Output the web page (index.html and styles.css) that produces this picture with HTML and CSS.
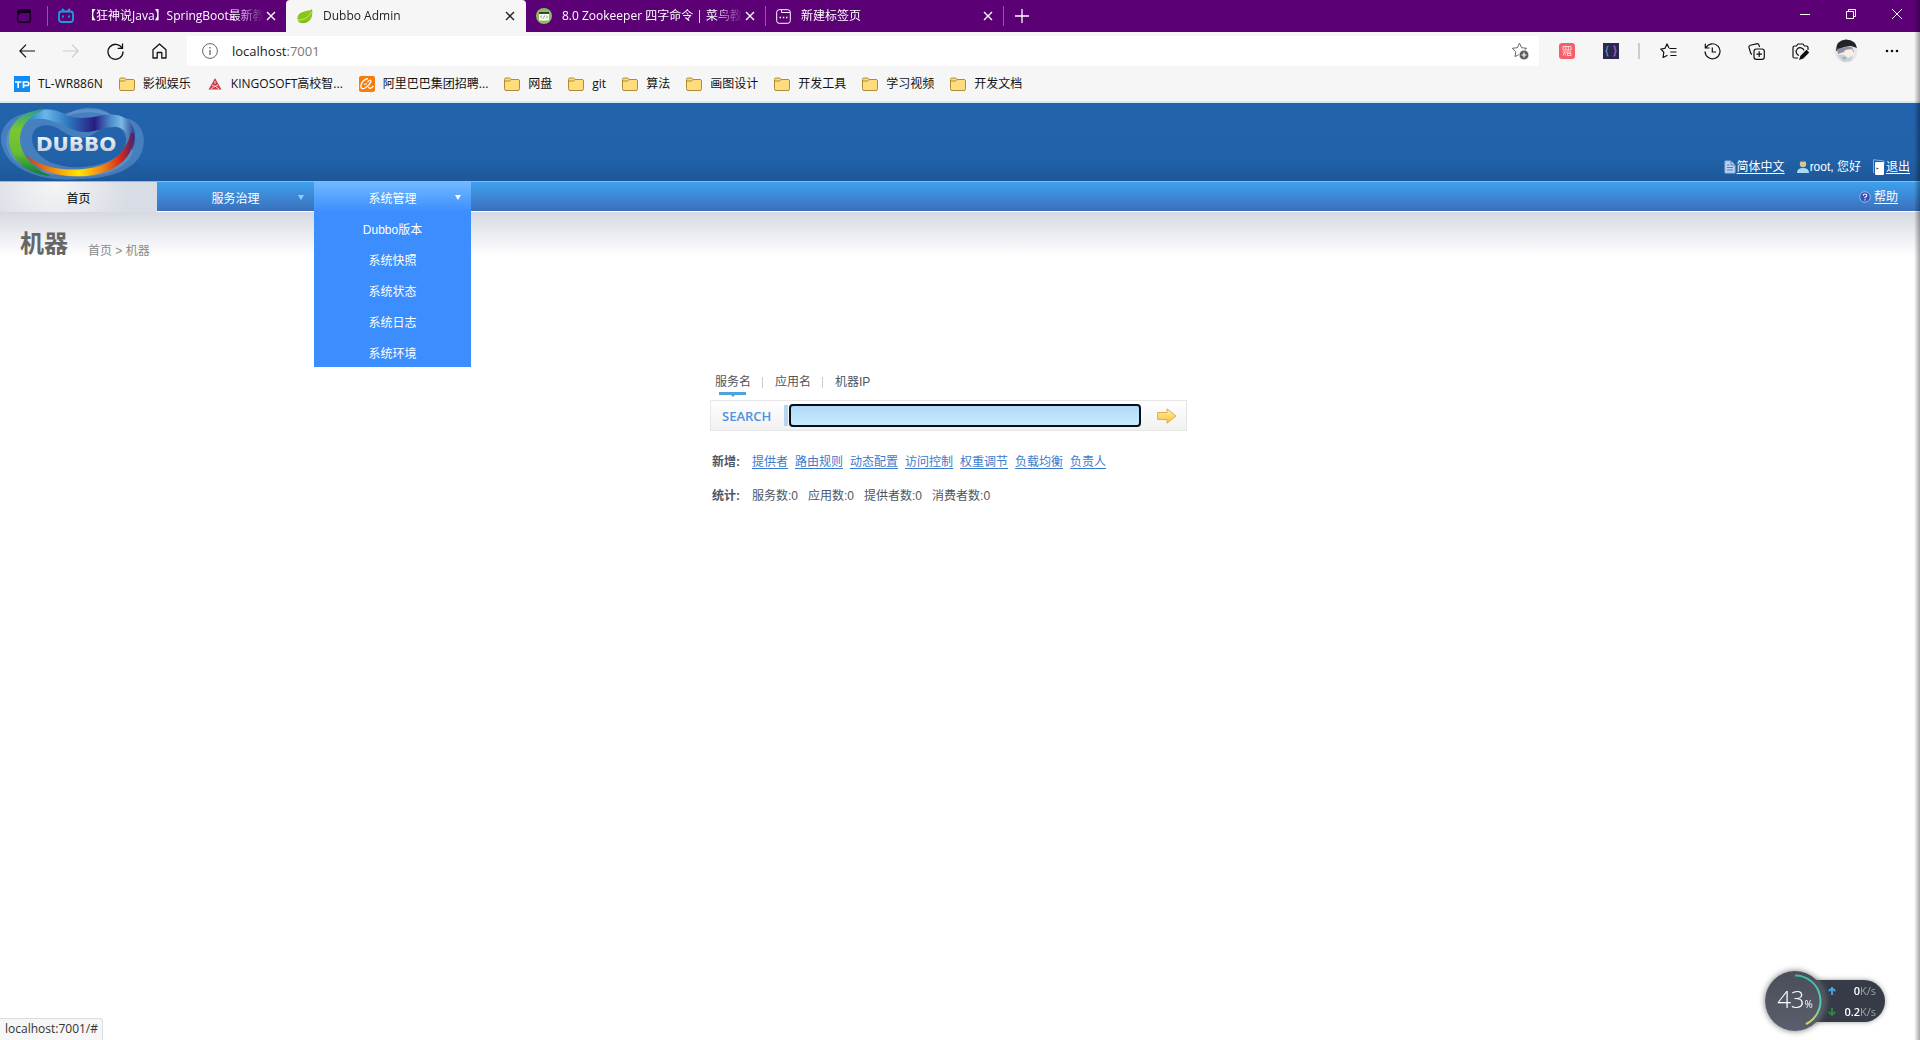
FILE: index.html
```html
<!DOCTYPE html>
<html lang="zh-CN">
<head>
<meta charset="utf-8">
<title>Dubbo Admin</title>
<link rel="stylesheet" href="styles.css">
</head>
<body>
<svg class="defs" aria-hidden="true">
  <symbol id="folder" viewBox="0 0 16 16">
    <path d="M.5 3.500Q.5 2 2 2H5.500L7.200 3.500H14Q15.500 3.500 15.500 5V12.500Q15.500 14.500 14 14.500H2Q.5 14.500 .5 12.500Z" fill="#ffdc7c" stroke="#b08a35"/>
    <path d="M.5 5H5.500L7.200 3.500" fill="none" stroke="#b08a35"/>
  </symbol>
  <symbol id="cross" viewBox="0 0 10 10"><path d="M1 1L9 9M9 1L1 9" fill="none" stroke="currentColor" stroke-width="1.400"/></symbol>
</svg>

<header class="browser">
  <div class="tabstrip">
    <button class="tab-actions" aria-label="标签操作"><svg width="14" height="14" viewBox="0 0 14 14"><rect x=".7" y=".7" width="12.600" height="12.600" rx="2" fill="none" stroke="#14001c" stroke-width="1.400"/><path d="M1 1H13V4H1ZM1 4H3V6H1Z" fill="#14001c"/></svg></button>
    <div class="tab tab-first">
      <svg width="16" height="16" viewBox="0 0 16 16" fill="none" stroke="#19a0dc" stroke-width="1.800"><rect x="1" y="3.500" width="14" height="10.500" rx="2.500"/><path d="M4 .8L6.300 3M12 .8L9.700 3M5 7.500V9.500M11 7.500V9.500"/></svg>
      <span class="tab-title">【狂神说Java】SpringBoot最新教</span>
      <button class="tab-close" aria-label="关闭"><svg width="10" height="10"><use href="#cross"/></svg></button>
    </div>
    <div class="tab tab-active">
      <svg width="16" height="16" viewBox="0 0 16 16"><path d="M15 1C12 4 1 2 .5 10Q.3 14 4 15C10 16 17 12 15 1Z" fill="#8cc419"/><path d="M1 12C7 12 12 9 14.500 4" fill="none" stroke="#c7e67c"/><path d="M2 14Q9 16 14 9Q10 15 2 14Z" fill="#5d951a"/></svg>
      <span class="tab-title">Dubbo Admin</span>
      <button class="tab-close" aria-label="关闭"><svg width="10" height="10"><use href="#cross"/></svg></button>
    </div>
    <div class="tab">
      <svg width="16" height="16" viewBox="0 0 16 16"><circle cx="8" cy="8" r="8" fill="#8fba5b"/><rect x="3" y="4" width="10" height="8.500" rx="1" fill="#fff"/><path d="M3 4H13V6H3Z" fill="#2c4a32"/><path d="M6 7.500L4.500 9L6 10.500M10 7.500L11.500 9L10 10.500M8.500 7.500L7.500 10.500" fill="none" stroke="#5f8a48" stroke-width=".8"/></svg>
      <span class="tab-title">8.0 Zookeeper 四字命令 | 菜鸟教</span>
      <button class="tab-close" aria-label="关闭"><svg width="10" height="10"><use href="#cross"/></svg></button>
    </div>
    <div class="tab tab-last">
      <svg width="15" height="15" viewBox="0 0 15 15" fill="none" stroke="#fff"><rect x=".7" y=".7" width="13.600" height="13.600" rx="2.500"/><path d="M5.500 1V3.500H14"/><path d="M3.500 8.500H5M6.800 8.500H8.300M10 8.500H11.500" stroke-width="1.500"/></svg>
      <span class="tab-title">新建标签页</span>
      <button class="tab-close" aria-label="关闭"><svg width="10" height="10"><use href="#cross"/></svg></button>
    </div>
    <button class="tab-new" aria-label="新建"><svg width="14" height="14" viewBox="0 0 14 14"><path d="M7 0V14M0 7H14" stroke="#fff" stroke-width="1.300"/></svg></button>
    <div class="window-buttons">
      <button aria-label="最小化"><svg width="10" height="10"><path d="M0 5.500H10" stroke="#fff"/></svg></button>
      <button aria-label="还原"><svg width="10" height="10" fill="none" stroke="#fff"><path d="M.5 2.500H7.500V9.500H.5ZM2.500 2.500V.5H9.500V7.500H7.500"/></svg></button>
      <button aria-label="关闭窗口"><svg width="10" height="10"><path d="M0 0L10 10M10 0L0 10" stroke="#fff"/></svg></button>
    </div>
  </div>

  <div class="toolbar">
    <div class="tools">
      <button aria-label="后退"><svg width="16" height="14" viewBox="0 0 16 14" fill="none" stroke="#111" stroke-width="1.200"><path d="M16 7H1M7 .7L.9 7L7 13.300"/></svg></button>
      <button aria-label="前进"><svg width="16" height="14" viewBox="0 0 16 14" fill="none" stroke="#ccc" stroke-width="1.200"><path d="M0 7H15M9 .7L15.100 7L9 13.300"/></svg></button>
      <button aria-label="刷新"><svg width="17" height="17" viewBox="0 0 17 17" fill="none" stroke="#111" stroke-width="1.300"><path d="M15 5A7.500 7.500 0 1 0 16 8.500M15.500 .5V5.300H10.700"/></svg></button>
      <button aria-label="主页"><svg width="15" height="16" viewBox="0 0 15 16" fill="none" stroke="#111" stroke-width="1.300" stroke-linejoin="round"><path d="M1 6.700L7.500 1L14 6.700V15H9.800V9.500H5.200V15H1Z"/></svg></button>
    </div>
    <div class="address">
      <svg width="16" height="16" viewBox="0 0 16 16" fill="none" stroke="#666"><circle cx="8" cy="8" r="7.400"/><path d="M8 7V12M8 4V5.500" stroke-width="1.300"/></svg>
      <span class="url">localhost<span class="port">:7001</span></span>
      <button class="add-favorite" aria-label="收藏此页"><svg width="18" height="18" viewBox="0 0 18 18"><path d="M8.500 1.200L10.600 5.700L15.700 6.300L12 9.700L13 14.600L8.500 12.200L4 14.600L4.800 9.700L1.200 6.300L6.300 5.700Z" fill="none" stroke="#666" stroke-linejoin="round"/><circle cx="13" cy="13" r="4.900" fill="#5c5c5c" stroke="#fff" stroke-width=".8"/><path d="M13 10.500V15.500M10.500 13H15.500" stroke="#fff" stroke-width="1.200"/></svg></button>
    </div>
    <div class="tools">
      <button aria-label="扩展一"><svg width="16" height="16" viewBox="0 0 16 16"><rect width="16" height="16" rx="3" fill="#f4606a"/><path d="M4 3.500H12V7H4ZM6.700 3.500V7M9.300 3.500V7M3.500 9H12.500M4 12.500L5.500 9.500L7 12.500M8.500 9.500V12.500H12V10.500H8.500" fill="none" stroke="#ffe3e4" stroke-width=".9"/></svg></button>
      <button aria-label="扩展二"><svg width="16" height="16" viewBox="0 0 16 16"><path d="M0 0H16V16H0Z" fill="#2b2a4c"/><path d="M5.500 3Q4 3 4 5V6.500L3 8L4 9.500V11Q4 13 5.500 13" fill="none" stroke="#5b95d4" stroke-width="1.200"/><path d="M10.500 3Q12 3 12 5V6.500L13 8L12 9.500V11Q12 13 10.500 13" fill="none" stroke="#9d55d4" stroke-width="1.400"/></svg></button>
      <span class="tool-divider"></span>
      <button aria-label="收藏夹"><svg width="17" height="16" viewBox="0 0 17 16" fill="none" stroke="#111" stroke-width="1.200" stroke-linejoin="round"><path d="M9 5L7 .9L5 5.300L.8 6L3.800 9.200L3.100 14.500L7.500 12.300M9.300 5.500H16.500M10.300 9H16.500M10.300 12.500H16.500"/></svg></button>
      <button aria-label="历史记录"><svg width="17" height="17" viewBox="0 0 17 17" fill="none" stroke="#111" stroke-width="1.200"><path d="M2 4.500A7.500 7.500 0 1 1 1 8.500M1.300 .8V5H5.500M8.300 4.500V9H12"/></svg></button>
      <button aria-label="集锦"><svg width="17" height="17" viewBox="0 0 17 17" fill="none" stroke="#111" stroke-width="1.200"><rect x="6" y="6" width="10.300" height="10.300" rx="2.300"/><path d="M11.200 8.300V14M8.400 11.200H14M4 11.500Q3 11 2.500 9.500L1 4.700Q.6 2.900 2.300 2.200L8.500 .8Q10.500 .4 11 2.200L11.600 4"/></svg></button>
      <button aria-label="网页捕获"><svg width="17" height="17" viewBox="0 0 17 17" fill="none" stroke="#111" stroke-width="1.200"><path d="M6 15H2.500Q1 15 1 13.500V4.500Q1 3 2.500 3H4.500L6 1H11L12.500 3H14.500Q16 3 16 4.500V7M7 12.500A4 4 0 1 1 12 7.500"/><path d="M8 16L9 13L14.500 7.500L16.500 9.500L11 15Z" fill="#111"/></svg></button>
      <button class="profile" aria-label="个人资料"><svg width="24" height="24" viewBox="0 0 24 24"><circle cx="12" cy="12" r="11.500" fill="#e9e7e8"/><path d="M2 12Q2 1 12 .5Q22 1 23 9L17 7L10 8L5 11Z" fill="#20222c"/><path d="M3 10L11 8L18 8L20 13L12 12L4 15Z" fill="#8e90a2"/><path d="M11 11L18 10L20 15L14 19L10 15Z" fill="#f9eee5"/><path d="M3 16L10 16L14 19L19 17L17 22L9 23Z" fill="#c0d0df"/><path d="M8 18L12 18L11 21Z" fill="#bca874"/></svg></button>
      <button aria-label="设置及其他"><svg width="14" height="4"><g fill="#111"><circle cx="2" cy="2" r="1.300"/><circle cx="7" cy="2" r="1.300"/><circle cx="12" cy="2" r="1.300"/></g></svg></button>
    </div>
  </div>

  <nav class="bookmarks" aria-label="书签">
    <a href="#"><svg width="16" height="16"><path d="M0 0H16V16H0Z" fill="#118cf5"/><path d="M1 6H7.500M4.200 6V12M9.500 12V6H13Q14.800 6 14.800 7.800T13 9.500H9.500" fill="none" stroke="#fff" stroke-width="1.700"/></svg>TL-WR886N</a>
    <a href="#"><svg width="16" height="16"><use href="#folder"/></svg>影视娱乐</a>
    <a href="#"><svg width="16" height="16" viewBox="0 0 16 16"><path d="M8 2L11 7.500L14.500 13.500H1.500L5 7.500Z" fill="#c93e46"/><path d="M8 5V8M8 10L4 13M8 10L12 13M5 9L8 10.500L11 9" stroke="#f4d5d7" fill="none"/></svg>KINGOSOFT高校智...</a>
    <a href="#"><svg width="16" height="16" viewBox="0 0 16 16"><rect width="16" height="16" rx="2" fill="#fa7a0c"/><path d="M9 2.500Q3 4 2 9.500Q1.500 14 6 12Q11 9 12 5Q11 3 8.500 6M9.500 11Q10.500 14 14.500 10M5 8.500L8 7.500" fill="none" stroke="#fff" stroke-width="1.300"/></svg>阿里巴巴集团招聘...</a>
    <a href="#"><svg width="16" height="16"><use href="#folder"/></svg>网盘</a>
    <a href="#"><svg width="16" height="16"><use href="#folder"/></svg>git</a>
    <a href="#"><svg width="16" height="16"><use href="#folder"/></svg>算法</a>
    <a href="#"><svg width="16" height="16"><use href="#folder"/></svg>画图设计</a>
    <a href="#"><svg width="16" height="16"><use href="#folder"/></svg>开发工具</a>
    <a href="#"><svg width="16" height="16"><use href="#folder"/></svg>学习视频</a>
    <a href="#"><svg width="16" height="16"><use href="#folder"/></svg>开发文档</a>
  </nav>
</header>

<div class="page">
  <header class="masthead">
    <svg class="logo" width="148" height="78" viewBox="0 0 148 78" role="img" aria-label="DUBBO">
      <defs>
        <linearGradient id="top" gradientUnits="userSpaceOnUse" x1="30" y1="0" x2="134" y2="0"><stop offset="0" stop-color="#2e8bd0"/><stop offset=".15" stop-color="#68b7e8"/><stop offset=".38" stop-color="#2c73bd"/><stop offset=".62" stop-color="#2a1d80"/><stop offset=".78" stop-color="#4d8fce"/><stop offset=".88" stop-color="#79b9e6"/><stop offset="1" stop-color="#314292"/></linearGradient>
        <linearGradient id="bottom" gradientUnits="userSpaceOnUse" x1="24" y1="0" x2="134" y2="0"><stop offset="0" stop-color="#d5311e"/><stop offset=".2" stop-color="#ee7414"/><stop offset=".5" stop-color="#ffe500"/><stop offset=".7" stop-color="#f28b13"/><stop offset=".88" stop-color="#d42a1c"/><stop offset="1" stop-color="#452370"/></linearGradient>
        <linearGradient id="left" x1="0" y1="0" x2="0" y2="1"><stop offset="0" stop-color="#2e9d8d"/><stop offset=".3" stop-color="#79c82f"/><stop offset=".65" stop-color="#68bd32"/><stop offset="1" stop-color="#087a3a"/></linearGradient>
        <linearGradient id="metal" x1="0" y1="0" x2="0" y2="1"><stop offset="0" stop-color="#fff"/><stop offset="1" stop-color="#b7c4d6"/></linearGradient>
      </defs>
      <path d="M66 12C84 0 105 4 115 15C137 12 147 28 143 45C138 66 112 76 78 76C35 80 1 62 1 35C2 20 15 11 30 10C43 3 56 5 66 12ZM62 28C50 19 33 20 32 35C32 52 52 66 82 64C110 62 127 51 126 36C124 22 109 17 98 28C86 38 73 36 62 28Z" fill="#8cb8e3" fill-opacity=".35" fill-rule="evenodd"/>
      <path d="M65 12C95 2 119 11 128 30C143 54 115 72 82 72C45 72 13 65 8 43C5 22 26 10 52 10Z" fill="none" stroke="#9cc2e8" stroke-opacity=".25" stroke-width="3"/>
      <path d="M33 10C44 4 57 7 66 12C86 20 103 9 117 12C132 15 140 30 132 48C130 36 127 25 116 24C104 23 92 32 77 28C61 23 48 12 30 17Z" fill="url(#top)"/>
      <path d="M24 49C31 60 57 69 84 66C112 63 126 50 131 29L134 31C135 52 119 69 87 73C57 75 33 67 24 49Z" fill="url(#bottom)"/>
      <path d="M44 7C24 7 8 18 9 40C12 59 28 71 51 73C34 66 21 53 20 37C20 22 30 13 44 7Z" fill="url(#left)"/>
      <text class="logo-text" x="36" y="48" fill="url(#metal)">DUBBO</text>
    </svg>
    <div class="account">
      <span class="account-item"><svg width="12" height="14" viewBox="0 0 12 14"><path d="M1 1H7L11 5V13H1Z" fill="#b9d3f0" stroke="#8fb3e0"/><path d="M7 1V5H11M3 5H5.500M3 7.500H9M3 10H9" stroke="#4f7fbb" fill="none"/></svg><a href="#">简体中文</a></span>
      <span class="account-item"><svg width="12" height="14" viewBox="0 0 12 14"><circle cx="6" cy="4" r="3.200" fill="#d6c68d"/><path d="M3 3Q6 -1 9 3L8 2H4Z" fill="#7a673d"/><path d="M0 13Q0 8 6 8T12 13Z" fill="#a8daf8"/></svg>root, 您好</span>
      <span class="account-item"><svg width="12" height="16" viewBox="0 0 12 16"><path d="M.5 14V.7L11 2V5" fill="none" stroke="#72b3f2"/><rect x="2" y="3" width="9" height="13" rx="1" fill="#fff"/><path d="M3.500 8.500L6 9.500L3.500 10.500Z" fill="#2a4f87"/></svg><a href="#">退出</a></span>
    </div>
  </header>

  <nav class="mainnav">
    <a class="nav-item nav-home" href="#">首页</a>
    <a class="nav-item" href="#">服务治理<span class="caret"></span></a>
    <div class="nav-group">
      <a class="nav-item nav-open" href="#">系统管理<span class="caret"></span></a>
      <div class="submenu">
        <a href="#">Dubbo版本</a>
        <a href="#">系统快照</a>
        <a href="#">系统状态</a>
        <a href="#">系统日志</a>
        <a href="#">系统环境</a>
      </div>
    </div>
    <span class="help"><svg width="12" height="12" viewBox="0 0 12 12"><circle cx="6" cy="6" r="5.300" fill="#3353b5" stroke="#9db4e8"/><path d="M4.200 4.700Q4.300 3 6 3T7.800 4.500Q7.800 5.500 6 6.300V7.200M6 8.300V9.500" fill="none" stroke="#fff" stroke-width="1.100"/></svg><a href="#">帮助</a></span>
  </nav>

  <main class="content">
    <div class="heading">
      <h1>机器</h1>
      <p class="crumbs">首页 &gt; 机器</p>
    </div>

    <section class="search">
      <div class="search-tabs">
        <a class="current" href="#">服务名</a>
        <a href="#">应用名</a>
        <a href="#">机器IP</a>
      </div>
      <form class="search-box">
        <label for="keyword">SEARCH</label>
        <span class="input-wrap"><input id="keyword" type="text"></span>
        <button type="button" class="go" aria-label="搜索"><svg width="20" height="16" viewBox="0 0 20 16"><defs><linearGradient id="gold" x1="0" y1="0" x2="0" y2="1"><stop offset="0" stop-color="#fff0ad"/><stop offset="1" stop-color="#fac336"/></linearGradient></defs><path d="M.7 4.500H10V.8L19 8L10 15.200V11.500H.7Z" fill="url(#gold)" stroke="#e1ab4c" stroke-linejoin="round"/></svg></button>
      </form>
      <div class="line links">
        <strong>新增:</strong>
        <a href="#">提供者</a>
        <a href="#">路由规则</a>
        <a href="#">动态配置</a>
        <a href="#">访问控制</a>
        <a href="#">权重调节</a>
        <a href="#">负载均衡</a>
        <a href="#">负责人</a>
      </div>
      <div class="line stats">
        <strong>统计:</strong>
        <span>服务数:0</span>
        <span>应用数:0</span>
        <span>提供者数:0</span>
        <span>消费者数:0</span>
      </div>
    </section>
  </main>
</div>

<div class="status">localhost:7001/#</div>

<aside class="monitor">
  <div class="gauge">
    <svg class="ring" width="60" height="60" viewBox="0 0 60 60"><defs><linearGradient id="arc" x1="0" y1="0" x2="0" y2="1"><stop offset="0" stop-color="#3fb9a6"/><stop offset=".6" stop-color="#4fd0ad"/><stop offset="1" stop-color="#d3dc62"/></linearGradient></defs><path d="M30 4.500A25.500 25.500 0 0 1 41 53" fill="none" stroke="url(#arc)" stroke-width="2"/></svg>
    <span class="gauge-value">43</span><span class="gauge-unit">%</span>
  </div>
  <div class="rates">
    <div class="rate"><svg width="8" height="8" viewBox="0 0 8 8"><path d="M4 8V1M.8 4.200L4 1L7.200 4.200" fill="none" stroke="#44a9ec" stroke-width="1.800"/></svg><b>0</b><span>K/s</span></div>
    <div class="rate"><svg width="8" height="8" viewBox="0 0 8 8"><path d="M4 0V7M.8 3.800L4 7L7.200 3.800" fill="none" stroke="#2c8a45" stroke-width="1.800"/></svg><b>0.2</b><span>K/s</span></div>
  </div>
</aside>
<div class="edge"></div>
</body>
</html>
```

FILE: styles.css
```css
* { box-sizing: border-box; }

body {
  margin: 0;
  min-height: 100vh;
  display: flex;
  flex-direction: column;
  position: relative;
  background: #fff;
  font: 12px/16px "Liberation Sans", "Noto Sans CJK SC", sans-serif;
  color: #4e5564;
}

svg { display: block; flex: none; }
.defs { position: absolute; width: 0; height: 0; }

button {
  display: flex;
  align-items: center;
  justify-content: center;
  padding: 0;
  border: 0;
  background: none;
  color: inherit;
}

/* Browser frame */
.browser {
  background: #f6f6f6;
  color: #222;
  font-family: "Open Sans", "Noto Sans CJK SC", sans-serif;
  border-bottom: 2px solid #dce8f2;
}

.tabstrip { display: flex; height: 32px; background: #5c0076; color: #fff; }
.tab-actions { width: 47px; }

.tab {
  display: flex;
  align-items: center;
  flex: 0 1 239px;
  min-width: 0;
  padding: 0 10px;
}
.tab-first, .tab-last { border-left: 1px solid #8f58a5; margin: 6px 0; }
.tab-last { border-right: 1px solid #8f58a5; }
.tab-title {
  flex: 1;
  min-width: 0;
  margin: 0 2px 0 10px;
  overflow: hidden;
  white-space: nowrap;
  mask-image: linear-gradient(to right, #000 calc(100% - 30px), transparent);
}
.tab-close { width: 10px; height: 16px; }
.tab-active {
  flex-basis: 240px;
  padding: 0 11px;
  background: #f6f6f6;
  color: #222;
  border-radius: 4px 4px 0 0;
}
.tab-new { width: 36px; }
.window-buttons { display: flex; margin-left: auto; height: 28px; }
.window-buttons button { width: 46px; }

.toolbar { display: flex; align-items: center; height: 38px; padding: 0 6px 0 5px; }
.tools { display: flex; align-items: center; }
.tools button { width: 44px; height: 30px; }
.tools .profile { width: 48px; }
.tool-divider { width: 2px; height: 16px; margin: 0 6px 0 5px; background: #ccc; }
.address {
  display: flex;
  align-items: center;
  flex: 1;
  height: 30px;
  margin: 0 6px;
  padding: 0 10px 0 15px;
  background: #fff;
  border-radius: 3px;
}
.url { margin-left: 14px; font-size: 13px; }
.port { color: #777; }
.add-favorite { margin-left: auto; }

.bookmarks { display: flex; gap: 16px; height: 31px; padding: 6px 14px; white-space: nowrap; }
.bookmarks a { display: flex; align-items: flex-start; gap: 8px; color: #111; text-decoration: none; }

/* Admin header */
.masthead {
  display: flex;
  justify-content: space-between;
  height: 78px;
  background: linear-gradient(#2263ad, #2162a9 70%, #1d5799);
}
.logo-text { font: bold 20px "DejaVu Sans", sans-serif; }
.account { display: flex; align-items: flex-end; gap: 12px; padding: 0 10px 6px 0; color: #fff; }
.account-item { display: flex; align-items: center; gap: 1px; height: 16px; }
.account a, .help a { color: #fff; text-underline-offset: 2px; }

.mainnav {
  display: flex;
  height: 31px;
  background: linear-gradient(#3ea1ee, #3b6fbc);
  border-top: 1px solid #7dbdf3;
  border-bottom: 1px solid #fff;
}
.nav-item {
  position: relative;
  display: block;
  width: 157px;
  height: 29px;
  line-height: 34px;
  text-align: center;
  color: #fff;
  text-decoration: none;
}
.nav-home { height: 30px; background: radial-gradient(circle at 35% 0, #f6f6f7, #d8dce4 70%); color: #000; }
.caret {
  position: absolute;
  right: 10px;
  top: 13px;
  border: 3px solid transparent;
  border-top: 5px solid #8fd0ff;
  border-bottom: 0;
}
.nav-group { position: relative; }
.nav-open { height: 30px; background: linear-gradient(#6fbaff, #3c8dfd); }
.nav-open .caret { border-top-color: #fff; }
.submenu { position: absolute; top: 30px; left: 0; width: 157px; background: #3c8dfd; z-index: 2; }
.submenu a { display: block; height: 31px; line-height: 36px; text-align: center; color: #fff; text-decoration: none; }
.help { display: flex; align-items: center; gap: 3px; margin-left: auto; padding-right: 22px; color: #fff; }

/* Page content */
.content { background: linear-gradient(#d6d9e2, #fff 44px); }
.heading { display: flex; align-items: flex-end; height: 47px; padding-left: 20px; }
.heading h1 { margin: 0; font-size: 24px; line-height: 30px; color: #666; }
.crumbs { margin: 0 0 0 20px; color: #8a8a8a; }

.search { width: 500px; max-width: 100%; margin: 115px auto 0; }
.search-tabs { display: flex; height: 26px; padding-left: 5px; }
.search-tabs a { position: relative; color: #4e5564; text-decoration: none; }
.search-tabs a + a { margin-left: 24px; }
.search-tabs a + a::before { content: ""; position: absolute; left: -13px; top: 3px; width: 1px; height: 11px; background: #ccc; }
.current::after { content: ""; position: absolute; left: 4px; top: 18px; width: 27px; height: 3px; background: #4ea3df; }
.current::before { content: ""; position: absolute; left: 16px; top: 21px; border: 2px solid transparent; border-top-color: #4ea3df; border-bottom: 0; }

.search-box {
  display: flex;
  align-items: center;
  width: 477px;
  height: 31px;
  border: 1px solid #e6e6e6;
  background: linear-gradient(#fff, #f1f1f1);
}
.search-box label { width: 73px; padding-left: 11px; font: 600 13px/18px "Open Sans", sans-serif; color: #4d93e3; }
.input-wrap { height: 21px; padding-left: 5px; background: linear-gradient(to right, #b5d6ee 4px, transparent 4px); display: flex; align-items: center; }
.input-wrap input {
  width: 352px;
  height: 23px;
  padding: 0 4px;
  border: 2px solid #04101c;
  border-radius: 4px;
  outline: 0;
  background: linear-gradient(#b2d8f7, #c8ebfd);
}
.go { width: 38px; height: 28px; margin-left: auto; }

.line { display: flex; padding-left: 2px; }
.links { margin-top: 23px; gap: 7px; }
.links strong { width: 33px; }
.links a { color: #3a7bd0; text-underline-offset: 2px; }
.stats { margin-top: 18px; gap: 10px; }
.stats strong { width: 30px; }

/* Overlays */
.status {
  position: fixed;
  left: 0;
  bottom: 0;
  height: 22px;
  padding: 2px 4px 0 5px;
  border: 1px solid #ddd;
  border-width: 1px 1px 0 0;
  border-radius: 0 3px 0 0;
  background: #f7f7f7;
  color: #333;
  font-family: "Open Sans", sans-serif;
}
.monitor { position: fixed; right: 35px; bottom: 9px; display: flex; align-items: center; font-family: "Open Sans", sans-serif; }
.gauge {
  position: relative;
  z-index: 1;
  display: flex;
  align-items: baseline;
  justify-content: center;
  width: 60px;
  height: 60px;
  padding-top: 14px;
  border-radius: 50%;
  background: linear-gradient(#4a4e59, #5b5f6d);
  box-shadow: 0 0 6px #777;
  color: #fff;
}
.ring { position: absolute; left: 0; top: 0; }
.gauge-value { font-size: 24px; line-height: 28px; font-weight: 300; }
.gauge-unit { font-size: 10px; }
.rates {
  width: 72px;
  height: 42px;
  margin-left: -12px;
  padding: 0 9px 0 15px;
  border-radius: 0 21px 21px 0;
  background: #363b47;
  box-shadow: 0 0 5px #999;
  color: #fff;
}
.rate { display: flex; align-items: center; height: 21px; font-size: 11px; }
.rate b { margin-left: auto; font-weight: 600; }
.rate span { color: #9da1aa; }
.edge { position: fixed; right: 0; top: 0; bottom: 0; width: 6px; background: linear-gradient(to right, transparent, rgba(0, 0, 0, .35)); pointer-events: none; }
```
